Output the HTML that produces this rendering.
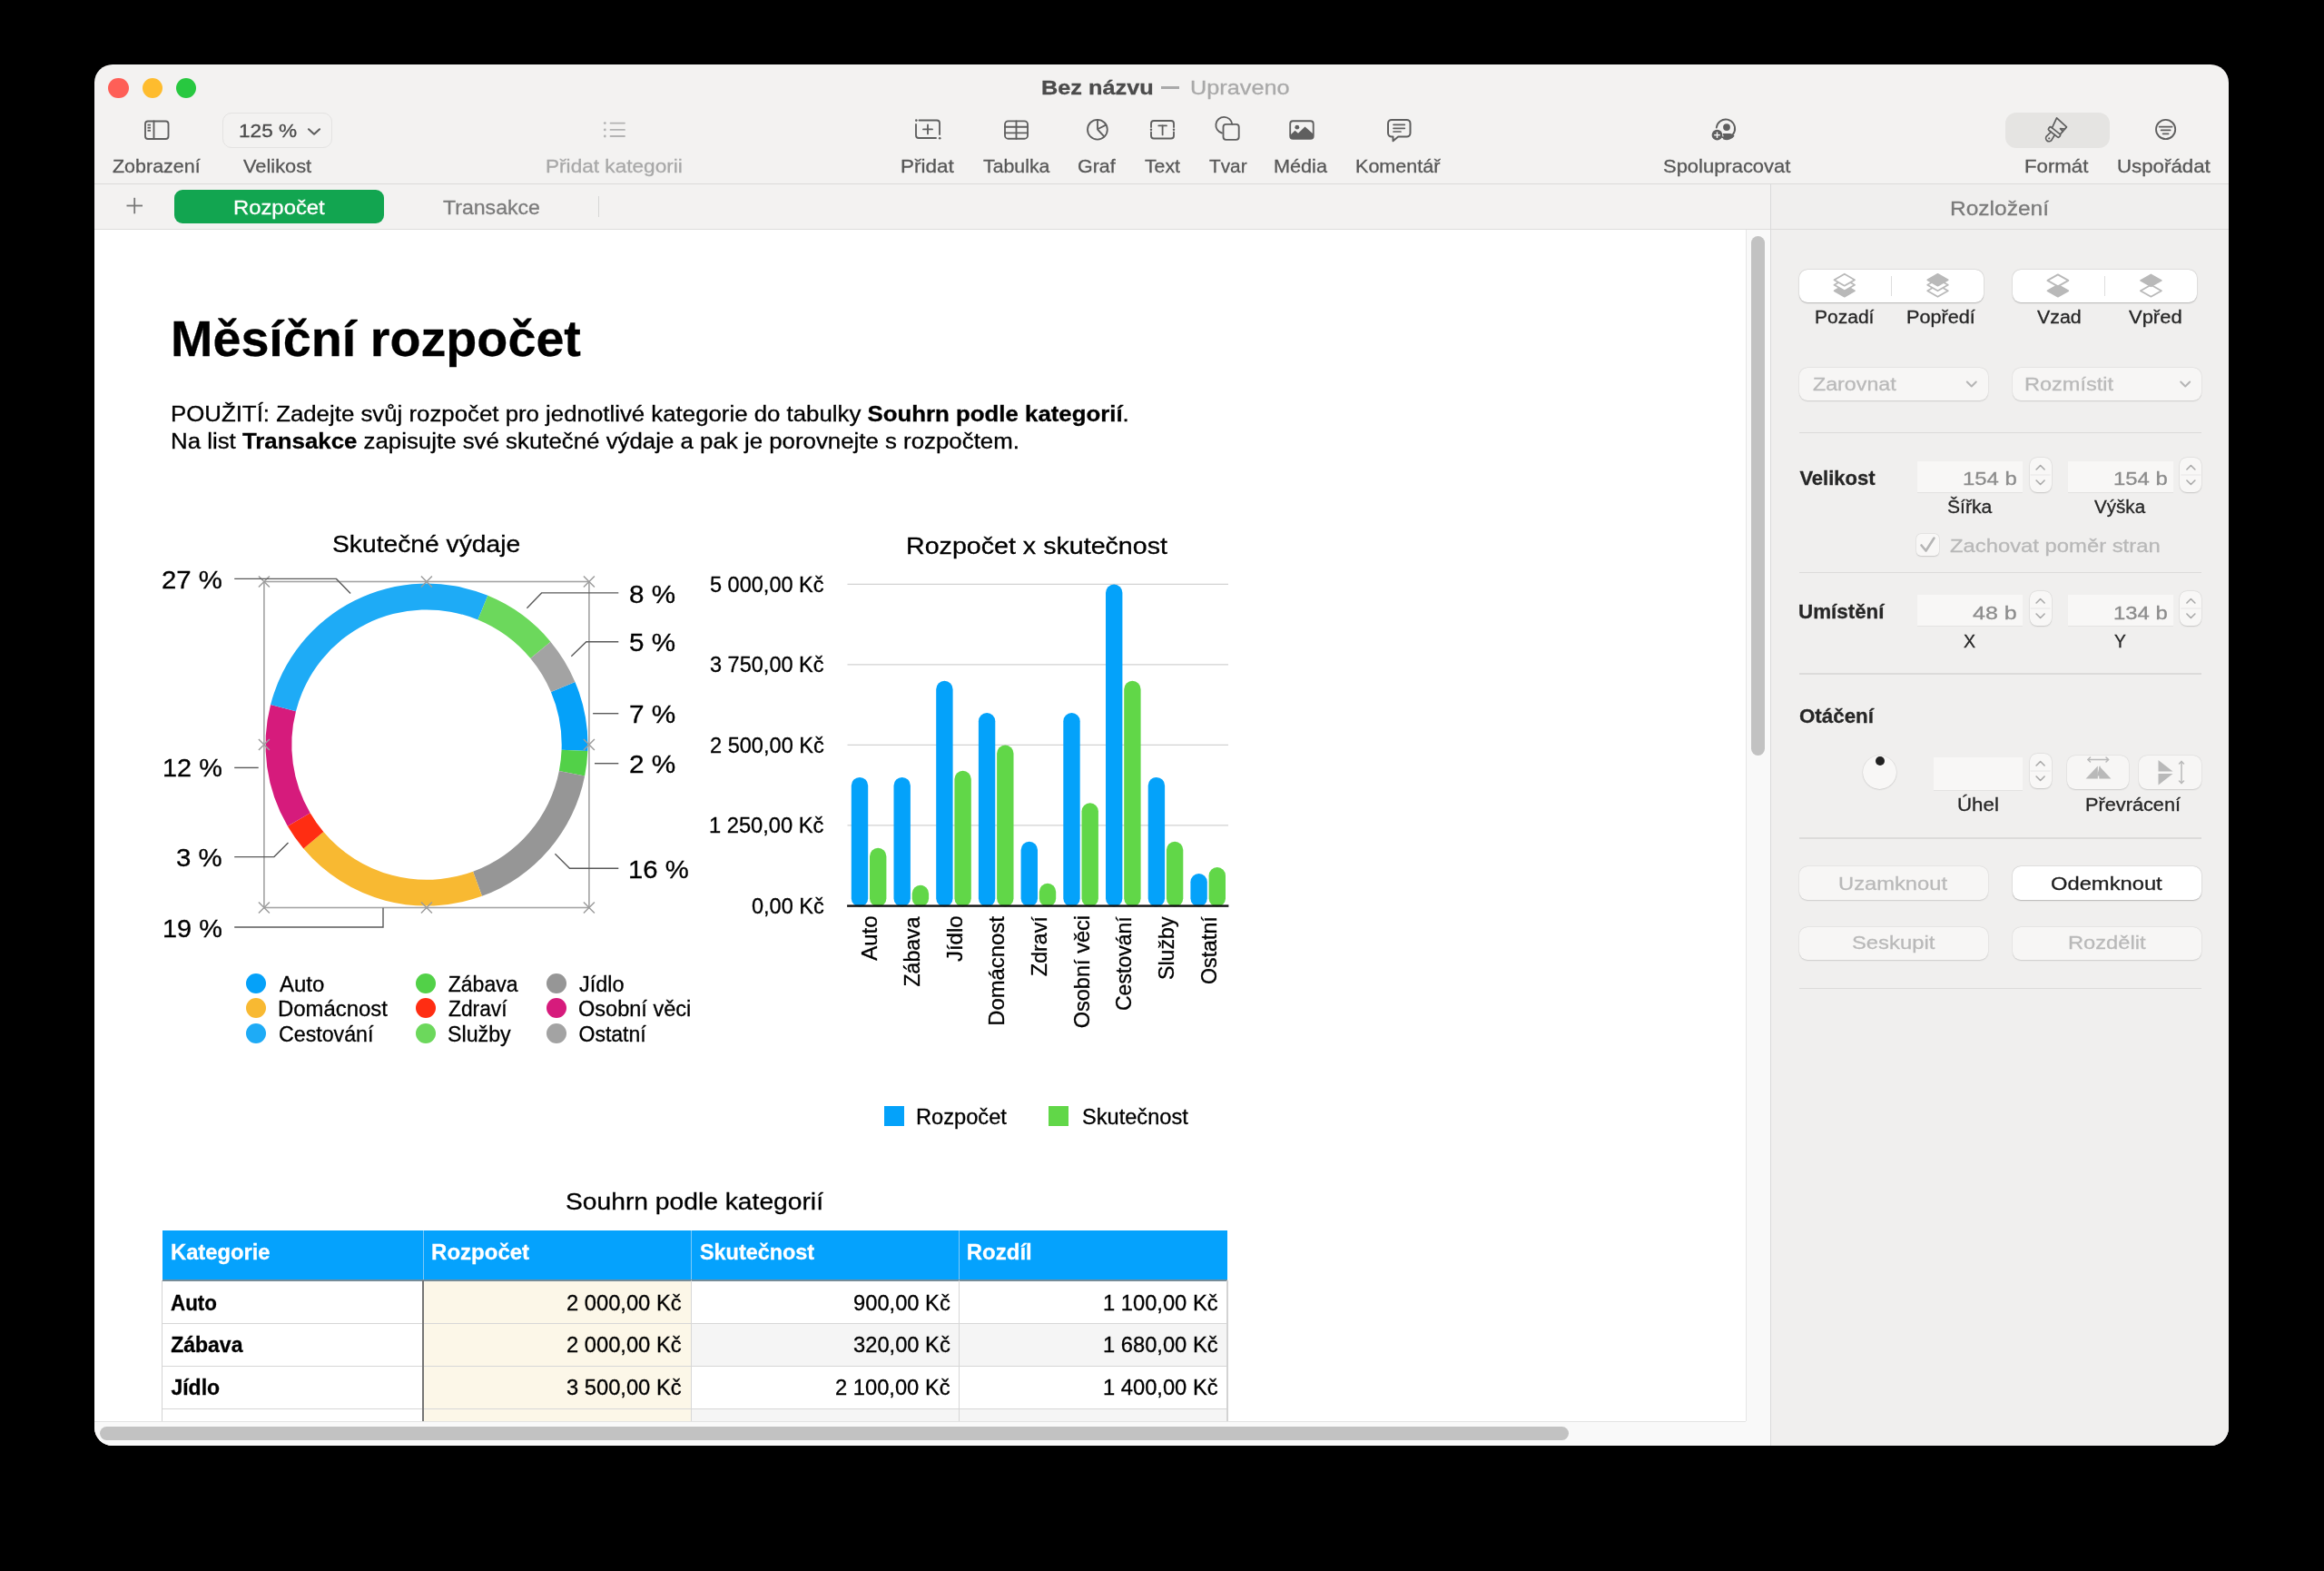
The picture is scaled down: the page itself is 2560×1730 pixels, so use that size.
<!DOCTYPE html>
<html><head><meta charset="utf-8"><title>Numbers – Bez názvu</title>
<style>
html,body{margin:0;padding:0;background:#000;width:2560px;height:1730px;overflow:hidden;}
body{position:relative;font-family:"Liberation Sans",sans-serif;}
.t{position:absolute;white-space:nowrap;transform-origin:0 0;font-family:"Liberation Sans",sans-serif;}
#root{position:absolute;left:0;top:0;width:2560px;height:1730px;will-change:transform;}
.t{-webkit-text-stroke:0.3px currentColor;}
svg text{stroke:#000;stroke-width:0.3px;}
svg{position:absolute;left:0;top:0;overflow:visible}
</style></head><body><div id="root">

<div id="win" style="position:absolute;left:104px;top:71px;width:2351px;height:1521px;border-radius:20px;background:#f3f2f1;overflow:hidden;">
</div>
<div style="position:absolute;left:104.00px;top:253.00px;width:1819.00px;height:1312.00px;background:#fff;"></div>
<div style="position:absolute;left:1923.00px;top:253.00px;width:27.00px;height:1312.00px;background:#f9f9f9;border-left:1.5px solid #e6e6e6;box-sizing:border-box;"></div>
<div style="position:absolute;left:1929.00px;top:259.60px;width:15.00px;height:572.20px;background:#c2c2c2;border-radius:7.5px;"></div>
<div style="position:absolute;left:104.00px;top:1565.00px;width:1846.00px;height:27.00px;background:#f9f9f9;border-bottom-left-radius:20px;"></div>
<div style="position:absolute;left:104.00px;top:1564.60px;width:1819.00px;height:1.20px;background:#e3e3e3;"></div>
<div style="position:absolute;left:110.00px;top:1571.30px;width:1618.00px;height:15.00px;background:#c2c2c2;border-radius:7.5px;"></div>
<div style="position:absolute;left:1950.00px;top:202.00px;width:505.00px;height:1390.00px;background:#f0efee;border-left:1px solid #dadada;box-sizing:border-box;border-bottom-right-radius:20px;"></div>
<div style="position:absolute;left:104.00px;top:202.00px;width:2351.00px;height:1.00px;background:#dbdad9;"></div>
<div style="position:absolute;left:104.00px;top:252.00px;width:2351.00px;height:1.00px;background:#dddcdb;"></div>
<div style="position:absolute;left:119.2px;top:85.7px;width:22.4px;height:22.4px;border-radius:50%;background:#fe5f57;"></div>
<div style="position:absolute;left:156.8px;top:85.7px;width:22.4px;height:22.4px;border-radius:50%;background:#febc2e;"></div>
<div style="position:absolute;left:194.0px;top:85.7px;width:22.4px;height:22.4px;border-radius:50%;background:#28c840;"></div>
<span class="t" style="left:1147.08px;top:86.00px;font-size:22px;line-height:22px;font-weight:bold;color:#4b4b4b;transform:scaleX(1.1498);">Bez názvu</span>
<div style="position:absolute;left:1279.00px;top:95.40px;width:20.30px;height:2.60px;background:#a9a9a9;"></div>
<span class="t" style="left:1311.43px;top:86.00px;font-size:22px;line-height:22px;font-weight:normal;color:#a9a9a9;transform:scaleX(1.1489);">Upraveno</span>
<span class="t" style="left:124.16px;top:172.00px;font-size:21px;line-height:21px;font-weight:normal;color:#575757;transform:scaleX(1.0226);">Zobrazení</span>
<span class="t" style="left:268.27px;top:172.00px;font-size:21px;line-height:21px;font-weight:normal;color:#575757;transform:scaleX(1.0385);">Velikost</span>
<span class="t" style="left:601.32px;top:172.00px;font-size:21px;line-height:21px;font-weight:normal;color:#a8a8a8;transform:scaleX(1.0769);">Přidat kategorii</span>
<span class="t" style="left:992.12px;top:172.00px;font-size:21px;line-height:21px;font-weight:normal;color:#575757;transform:scaleX(1.0717);">Přidat</span>
<span class="t" style="left:1082.79px;top:172.00px;font-size:21px;line-height:21px;font-weight:normal;color:#575757;transform:scaleX(1.0139);">Tabulka</span>
<span class="t" style="left:1187.28px;top:172.00px;font-size:21px;line-height:21px;font-weight:normal;color:#575757;transform:scaleX(1.0207);">Graf</span>
<span class="t" style="left:1260.99px;top:172.00px;font-size:21px;line-height:21px;font-weight:normal;color:#575757;transform:scaleX(1.0112);">Text</span>
<span class="t" style="left:1331.81px;top:172.00px;font-size:21px;line-height:21px;font-weight:normal;color:#575757;transform:scaleX(0.9897);">Tvar</span>
<span class="t" style="left:1403.00px;top:172.00px;font-size:21px;line-height:21px;font-weight:normal;color:#575757;transform:scaleX(1.0306);">Média</span>
<span class="t" style="left:1493.20px;top:172.00px;font-size:21px;line-height:21px;font-weight:normal;color:#575757;transform:scaleX(1.0265);">Komentář</span>
<span class="t" style="left:1831.65px;top:172.00px;font-size:21px;line-height:21px;font-weight:normal;color:#575757;transform:scaleX(1.0456);">Spolupracovat</span>
<span class="t" style="left:2229.95px;top:172.00px;font-size:21px;line-height:21px;font-weight:normal;color:#575757;transform:scaleX(1.0584);">Formát</span>
<span class="t" style="left:2332.48px;top:172.00px;font-size:21px;line-height:21px;font-weight:normal;color:#575757;transform:scaleX(1.0607);">Uspořádat</span>
<div style="position:absolute;left:245.20px;top:123.50px;width:121.20px;height:39.80px;border:1.5px solid #e3e2e1;border-radius:10px;box-sizing:border-box;background:#f3f2f1;"></div>
<span class="t" style="left:263.30px;top:133.80px;font-size:20px;line-height:20px;font-weight:normal;color:#4a4a4a;transform:scaleX(1.1303);">125 %</span>
<div style="position:absolute;left:2208.50px;top:124.00px;width:115.10px;height:39.30px;background:#e5e4e2;border-radius:12px;"></div>
<div style="position:absolute;left:192.30px;top:209.20px;width:230.80px;height:36.60px;background:#12a550;border-radius:9px;"></div>
<span class="t" style="left:256.70px;top:218.10px;font-size:22px;line-height:22px;font-weight:normal;color:#ffffff;transform:scaleX(1.0831);">Rozpočet</span>
<span class="t" style="left:487.68px;top:218.10px;font-size:22px;line-height:22px;font-weight:normal;color:#7b7b7b;transform:scaleX(1.0491);">Transakce</span>
<div style="position:absolute;left:659.30px;top:216.40px;width:1.20px;height:22.20px;background:#d6d6d6;"></div>
<span class="t" style="left:2148.05px;top:219.00px;font-size:22px;line-height:22px;font-weight:normal;color:#7a7a7a;transform:scaleX(1.1146);">Rozložení</span>
<span class="t" style="left:187.57px;top:345.00px;font-size:56px;line-height:56px;font-weight:bold;color:#000;transform:scaleX(0.9947);">Měsíční rozpočet</span>
<span class="t" style="left:188.00px;top:445.40px;font-size:23px;line-height:23px;color:#000;transform:scaleX(1.1222);">POUŽITÍ: Zadejte svůj rozpočet pro jednotlivé kategorie do tabulky <b>Souhrn podle kategorií</b>.</span>
<span class="t" style="left:187.99px;top:474.80px;font-size:23px;line-height:23px;color:#000;transform:scaleX(1.1233);">Na list <b>Transakce</b> zapisujte své skutečné výdaje a pak je porovnejte s rozpočtem.</span>
<span class="t" style="left:366.18px;top:585.50px;font-size:26px;line-height:26px;font-weight:normal;color:#000;transform:scaleX(1.0863);">Skutečné výdaje</span>
<span class="t" style="left:998.21px;top:589.10px;font-size:25px;line-height:25px;font-weight:normal;color:#000;transform:scaleX(1.1449);">Rozpočet x skutečnost</span>
<span class="t" style="left:622.78px;top:1309.90px;font-size:26px;line-height:26px;font-weight:normal;color:#000;transform:scaleX(1.0854);">Souhrn podle kategorií</span>
<span class="t" style="left:177.61px;top:625.80px;font-size:27px;line-height:27px;font-weight:normal;color:#000;transform:scaleX(1.0869);">27 %</span>
<span class="t" style="left:178.66px;top:832.70px;font-size:27px;line-height:27px;font-weight:normal;color:#000;transform:scaleX(1.0695);">12 %</span>
<span class="t" style="left:193.81px;top:931.60px;font-size:27px;line-height:27px;font-weight:normal;color:#000;transform:scaleX(1.0891);">3 %</span>
<span class="t" style="left:178.66px;top:1009.50px;font-size:27px;line-height:27px;font-weight:normal;color:#000;transform:scaleX(1.0695);">19 %</span>
<span class="t" style="left:693.07px;top:641.90px;font-size:27px;line-height:27px;font-weight:normal;color:#000;transform:scaleX(1.0966);">8 %</span>
<span class="t" style="left:693.07px;top:695.00px;font-size:27px;line-height:27px;font-weight:normal;color:#000;transform:scaleX(1.0966);">5 %</span>
<span class="t" style="left:692.78px;top:774.00px;font-size:27px;line-height:27px;font-weight:normal;color:#000;transform:scaleX(1.1028);">7 %</span>
<span class="t" style="left:692.78px;top:829.00px;font-size:27px;line-height:27px;font-weight:normal;color:#000;transform:scaleX(1.1028);">2 %</span>
<span class="t" style="left:692.13px;top:944.60px;font-size:27px;line-height:27px;font-weight:normal;color:#000;transform:scaleX(1.0832);">16 %</span>
<div style="position:absolute;left:271.4px;top:1072.0px;width:22px;height:22px;border-radius:50%;background:#05a1f9"></div>
<span class="t" style="left:307.80px;top:1073.00px;font-size:23px;line-height:23px;font-weight:normal;color:#000;transform:scaleX(1.0394);">Auto</span>
<div style="position:absolute;left:271.4px;top:1099.4px;width:22px;height:22px;border-radius:50%;background:#f8b932"></div>
<span class="t" style="left:305.85px;top:1100.40px;font-size:23px;line-height:23px;font-weight:normal;color:#000;transform:scaleX(1.0398);">Domácnost</span>
<div style="position:absolute;left:271.4px;top:1127.0px;width:22px;height:22px;border-radius:50%;background:#1eabf6"></div>
<span class="t" style="left:306.67px;top:1127.60px;font-size:23px;line-height:23px;font-weight:normal;color:#000;transform:scaleX(1.0083);">Cestování</span>
<div style="position:absolute;left:458.0px;top:1072.0px;width:22px;height:22px;border-radius:50%;background:#52d148"></div>
<span class="t" style="left:493.75px;top:1073.00px;font-size:23px;line-height:23px;font-weight:normal;color:#000;">Zábava</span>
<div style="position:absolute;left:458.0px;top:1099.4px;width:22px;height:22px;border-radius:50%;background:#ff2d12"></div>
<span class="t" style="left:493.76px;top:1100.40px;font-size:23px;line-height:23px;font-weight:normal;color:#000;transform:scaleX(0.9899);">Zdraví</span>
<div style="position:absolute;left:458.0px;top:1127.0px;width:22px;height:22px;border-radius:50%;background:#6cd85c"></div>
<span class="t" style="left:493.49px;top:1127.60px;font-size:23px;line-height:23px;font-weight:normal;color:#000;transform:scaleX(1.0088);">Služby</span>
<div style="position:absolute;left:602.0px;top:1072.0px;width:22px;height:22px;border-radius:50%;background:#969696"></div>
<span class="t" style="left:638.12px;top:1073.00px;font-size:23px;line-height:23px;font-weight:normal;color:#000;transform:scaleX(1.0201);">Jídlo</span>
<div style="position:absolute;left:602.0px;top:1099.4px;width:22px;height:22px;border-radius:50%;background:#d61b7c"></div>
<span class="t" style="left:637.48px;top:1100.40px;font-size:23px;line-height:23px;font-weight:normal;color:#000;transform:scaleX(1.0235);">Osobní věci</span>
<div style="position:absolute;left:602.0px;top:1127.0px;width:22px;height:22px;border-radius:50%;background:#a3a3a3"></div>
<span class="t" style="left:637.50px;top:1127.60px;font-size:23px;line-height:23px;font-weight:normal;color:#000;">Ostatní</span>
<span class="t" style="left:782.01px;top:632.60px;font-size:23px;line-height:23px;font-weight:normal;color:#000;transform:scaleX(1.0227);">5 000,00 Kč</span>
<span class="t" style="left:782.01px;top:721.10px;font-size:23px;line-height:23px;font-weight:normal;color:#000;transform:scaleX(1.0227);">3 750,00 Kč</span>
<span class="t" style="left:781.75px;top:809.60px;font-size:23px;line-height:23px;font-weight:normal;color:#000;transform:scaleX(1.0248);">2 500,00 Kč</span>
<span class="t" style="left:781.10px;top:898.10px;font-size:23px;line-height:23px;font-weight:normal;color:#000;transform:scaleX(1.0301);">1 250,00 Kč</span>
<span class="t" style="left:827.81px;top:986.60px;font-size:23px;line-height:23px;font-weight:normal;color:#000;transform:scaleX(1.0222);">0,00 Kč</span>
<div style="position:absolute;left:974.20px;top:1218.00px;width:22.30px;height:21.80px;background:#04a2fa;"></div>
<div style="position:absolute;left:1155.30px;top:1218.00px;width:21.90px;height:21.80px;background:#61d748;"></div>
<span class="t" style="left:1009.07px;top:1218.90px;font-size:23px;line-height:23px;font-weight:normal;color:#000;transform:scaleX(1.0281);">Rozpočet</span>
<span class="t" style="left:1191.67px;top:1218.90px;font-size:23px;line-height:23px;font-weight:normal;color:#000;transform:scaleX(1.0264);">Skutečnost</span>
<svg width="2560" height="1730" viewBox="0 0 2560 1730" style="position:absolute;left:0;top:0">
<path d="M633.45 750.89 A177.50 177.50 0 0 1 647.37 826.99 L618.59 825.87 A148.70 148.70 0 0 0 606.93 762.12 Z" fill="#05a1f9"/>
<path d="M647.37 826.99 A177.50 177.50 0 0 1 644.13 854.50 L615.88 848.92 A148.70 148.70 0 0 0 618.59 825.87 Z" fill="#52d148"/>
<path d="M644.13 854.50 A177.50 177.50 0 0 1 530.95 986.81 L521.06 959.76 A148.70 148.70 0 0 0 615.88 848.92 Z" fill="#969696"/>
<path d="M530.95 986.81 A177.50 177.50 0 0 1 334.33 934.56 L356.34 915.99 A148.70 148.70 0 0 0 521.06 959.76 Z" fill="#f8b932"/>
<path d="M334.33 934.56 A177.50 177.50 0 0 1 316.85 909.82 L341.70 895.26 A148.70 148.70 0 0 0 356.34 915.99 Z" fill="#ff2d12"/>
<path d="M316.85 909.82 A177.50 177.50 0 0 1 298.07 775.98 L325.97 783.14 A148.70 148.70 0 0 0 341.70 895.26 Z" fill="#d61b7c"/>
<path d="M298.07 775.98 A177.50 177.50 0 0 1 537.34 655.87 L526.41 682.52 A148.70 148.70 0 0 0 325.97 783.14 Z" fill="#1eabf6"/>
<path d="M537.34 655.87 A177.50 177.50 0 0 1 606.50 706.64 L584.35 725.05 A148.70 148.70 0 0 0 526.41 682.52 Z" fill="#6cd85c"/>
<path d="M606.50 706.64 A177.50 177.50 0 0 1 633.45 750.89 L606.93 762.12 A148.70 148.70 0 0 0 584.35 725.05 Z" fill="#a3a3a3"/>
<rect x="290.9" y="640.5" width="358" height="359" fill="none" stroke="#a3a3a3" stroke-width="1.6"/>
<path d="M284.9 634.5 l12 12 M296.9 634.5 l-12 12" stroke="#9d9d9d" stroke-width="1.5" fill="none"/>
<path d="M284.9 814.0 l12 12 M296.9 814.0 l-12 12" stroke="#9d9d9d" stroke-width="1.5" fill="none"/>
<path d="M284.9 993.5 l12 12 M296.9 993.5 l-12 12" stroke="#9d9d9d" stroke-width="1.5" fill="none"/>
<path d="M463.9 634.5 l12 12 M475.9 634.5 l-12 12" stroke="#9d9d9d" stroke-width="1.5" fill="none"/>
<path d="M463.9 993.5 l12 12 M475.9 993.5 l-12 12" stroke="#9d9d9d" stroke-width="1.5" fill="none"/>
<path d="M642.9 634.5 l12 12 M654.9 634.5 l-12 12" stroke="#9d9d9d" stroke-width="1.5" fill="none"/>
<path d="M642.9 814.0 l12 12 M654.9 814.0 l-12 12" stroke="#9d9d9d" stroke-width="1.5" fill="none"/>
<path d="M642.9 993.5 l12 12 M654.9 993.5 l-12 12" stroke="#9d9d9d" stroke-width="1.5" fill="none"/>
<path d="M258.2 637.4 H370.5 L386.1 653.6" stroke="#5a5a5a" stroke-width="1.4" fill="none"/>
<path d="M258.2 845.4 H284.7" stroke="#5a5a5a" stroke-width="1.4" fill="none"/>
<path d="M258.2 943.6 H301.9 L317.5 928" stroke="#5a5a5a" stroke-width="1.4" fill="none"/>
<path d="M258.2 1021 H422 V999.7" stroke="#5a5a5a" stroke-width="1.4" fill="none"/>
<path d="M681.3 652.9 H596.6 L580.4 669.8" stroke="#5a5a5a" stroke-width="1.4" fill="none"/>
<path d="M681.3 706.7 H645.8 L629.3 722.7" stroke="#5a5a5a" stroke-width="1.4" fill="none"/>
<path d="M681.3 785.7 H653.1" stroke="#5a5a5a" stroke-width="1.4" fill="none"/>
<path d="M681.3 840.7 H655" stroke="#5a5a5a" stroke-width="1.4" fill="none"/>
<path d="M681.3 956.3 H627.5 L611.4 940.3" stroke="#5a5a5a" stroke-width="1.4" fill="none"/>
<line x1="933.5" y1="643.3" x2="1353" y2="643.3" stroke="#d2d2d2" stroke-width="1.3"/>
<line x1="933.5" y1="731.8" x2="1353" y2="731.8" stroke="#d2d2d2" stroke-width="1.3"/>
<line x1="933.5" y1="820.3" x2="1353" y2="820.3" stroke="#d2d2d2" stroke-width="1.3"/>
<line x1="933.5" y1="908.8" x2="1353" y2="908.8" stroke="#d2d2d2" stroke-width="1.3"/>
<rect x="937.80" y="855.90" width="18.4" height="142.60" rx="9.2" fill="#04a2fa"/>
<rect x="958.00" y="933.78" width="18.4" height="64.72" rx="9.2" fill="#61d748"/>
<rect x="984.50" y="855.90" width="18.4" height="142.60" rx="9.2" fill="#04a2fa"/>
<rect x="1004.70" y="974.84" width="18.4" height="23.66" rx="9.2" fill="#61d748"/>
<rect x="1031.20" y="749.70" width="18.4" height="248.80" rx="9.2" fill="#04a2fa"/>
<rect x="1051.40" y="848.82" width="18.4" height="149.68" rx="9.2" fill="#61d748"/>
<rect x="1077.90" y="785.10" width="18.4" height="213.40" rx="9.2" fill="#04a2fa"/>
<rect x="1098.10" y="820.50" width="18.4" height="178.00" rx="9.2" fill="#61d748"/>
<rect x="1124.60" y="926.70" width="18.4" height="71.80" rx="9.2" fill="#04a2fa"/>
<rect x="1144.80" y="972.72" width="18.4" height="25.78" rx="9.2" fill="#61d748"/>
<rect x="1171.30" y="785.10" width="18.4" height="213.40" rx="9.2" fill="#04a2fa"/>
<rect x="1191.50" y="884.22" width="18.4" height="114.28" rx="9.2" fill="#61d748"/>
<rect x="1218.00" y="643.50" width="18.4" height="355.00" rx="9.2" fill="#04a2fa"/>
<rect x="1238.20" y="749.70" width="18.4" height="248.80" rx="9.2" fill="#61d748"/>
<rect x="1264.70" y="855.90" width="18.4" height="142.60" rx="9.2" fill="#04a2fa"/>
<rect x="1284.90" y="926.70" width="18.4" height="71.80" rx="9.2" fill="#61d748"/>
<rect x="1311.40" y="962.10" width="18.4" height="36.40" rx="9.2" fill="#04a2fa"/>
<rect x="1331.60" y="955.02" width="18.4" height="43.48" rx="9.2" fill="#61d748"/>
<rect x="933.1" y="996.4" width="420.3" height="2.4" fill="#111"/>
<text transform="translate(966.15 1008.42) rotate(-90) scale(1.0437 1)" text-anchor="end" font-family="Liberation Sans" font-size="23" fill="#000">Auto</text>
<text transform="translate(1012.85 1009.43) rotate(-90) scale(1.0066 1)" text-anchor="end" font-family="Liberation Sans" font-size="23" fill="#000">Zábava</text>
<text transform="translate(1059.55 1008.40) rotate(-90) scale(1.0434 1)" text-anchor="end" font-family="Liberation Sans" font-size="23" fill="#000">Jídlo</text>
<text transform="translate(1106.25 1009.19) rotate(-90) scale(1.0372 1)" text-anchor="end" font-family="Liberation Sans" font-size="23" fill="#000">Domácnost</text>
<text transform="translate(1152.95 1009.21) rotate(-90) scale(1.0101 1)" text-anchor="end" font-family="Liberation Sans" font-size="23" fill="#000">Zdraví</text>
<text transform="translate(1199.65 1007.91) rotate(-90) scale(1.0252 1)" text-anchor="end" font-family="Liberation Sans" font-size="23" fill="#000">Osobní věci</text>
<text transform="translate(1246.35 1009.21) rotate(-90) scale(1.0034 1)" text-anchor="end" font-family="Liberation Sans" font-size="23" fill="#000">Cestování</text>
<text transform="translate(1293.05 1009.37) rotate(-90) scale(1.0103 1)" text-anchor="end" font-family="Liberation Sans" font-size="23" fill="#000">Služby</text>
<text transform="translate(1339.75 1009.25) rotate(-90) scale(1.0082 1)" text-anchor="end" font-family="Liberation Sans" font-size="23" fill="#000">Ostatní</text>
</svg>
<div style="position:absolute;left:178.70px;top:1354.80px;width:1173.30px;height:55.20px;background:#05a2fd;"></div>
<div style="position:absolute;left:465.70px;top:1354.80px;width:1.00px;height:54.20px;background:#7cc9f7;"></div>
<div style="position:absolute;left:760.70px;top:1354.80px;width:1.00px;height:54.20px;background:#7cc9f7;"></div>
<div style="position:absolute;left:1055.70px;top:1354.80px;width:1.00px;height:54.20px;background:#7cc9f7;"></div>
<div style="position:absolute;left:178.70px;top:1408.60px;width:1173.30px;height:2.00px;background:#758c99;"></div>
<div style="position:absolute;left:466.20px;top:1410.60px;width:295.00px;height:46.50px;background:#fcf7e8;"></div>
<div style="position:absolute;left:466.20px;top:1457.10px;width:295.00px;height:47.20px;background:#fcf7e8;"></div>
<div style="position:absolute;left:761.20px;top:1457.10px;width:590.80px;height:47.20px;background:#f5f5f5;"></div>
<div style="position:absolute;left:466.20px;top:1504.30px;width:295.00px;height:46.80px;background:#fcf7e8;"></div>
<div style="position:absolute;left:466.20px;top:1551.10px;width:295.00px;height:13.60px;background:#fcf7e8;"></div>
<div style="position:absolute;left:761.20px;top:1551.10px;width:590.80px;height:13.60px;background:#f5f5f5;"></div>
<div style="position:absolute;left:178.70px;top:1456.60px;width:1173.30px;height:1.10px;background:#d7d7d7;"></div>
<div style="position:absolute;left:178.70px;top:1503.80px;width:1173.30px;height:1.10px;background:#d7d7d7;"></div>
<div style="position:absolute;left:178.70px;top:1550.60px;width:1173.30px;height:1.10px;background:#d7d7d7;"></div>
<div style="position:absolute;left:178.20px;top:1410.00px;width:1.20px;height:155.00px;background:#d3d3d3;"></div>
<div style="position:absolute;left:1351.40px;top:1410.00px;width:1.20px;height:155.00px;background:#d3d3d3;"></div>
<div style="position:absolute;left:760.70px;top:1410.00px;width:1.10px;height:155.00px;background:#d7d7d7;"></div>
<div style="position:absolute;left:1055.70px;top:1410.00px;width:1.10px;height:155.00px;background:#d7d7d7;"></div>
<div style="position:absolute;left:465.40px;top:1410.00px;width:1.70px;height:155.00px;background:#767676;"></div>
<span class="t" style="left:187.69px;top:1366.90px;font-size:24px;line-height:24px;font-weight:bold;color:#fff;transform:scaleX(0.9894);">Kategorie</span>
<span class="t" style="left:475.08px;top:1366.90px;font-size:24px;line-height:24px;font-weight:bold;color:#fff;">Rozpočet</span>
<span class="t" style="left:771.09px;top:1366.90px;font-size:24px;line-height:24px;font-weight:bold;color:#fff;transform:scaleX(0.9751);">Skutečnost</span>
<span class="t" style="left:1064.77px;top:1366.90px;font-size:24px;line-height:24px;font-weight:bold;color:#fff;">Rozdíl</span>
<span class="t" style="left:188.31px;top:1423.50px;font-size:23px;line-height:23px;font-weight:bold;color:#000;transform:scaleX(0.9725);">Auto</span>
<span class="t" style="left:624.29px;top:1423.50px;font-size:23px;line-height:23px;font-weight:normal;color:#000;transform:scaleX(1.0310);">2 000,00 Kč</span>
<span class="t" style="left:939.51px;top:1423.50px;font-size:23px;line-height:23px;font-weight:normal;color:#000;transform:scaleX(1.0310);">900,00 Kč</span>
<span class="t" style="left:1215.29px;top:1423.50px;font-size:23px;line-height:23px;font-weight:normal;color:#000;transform:scaleX(1.0310);">1 100,00 Kč</span>
<span class="t" style="left:188.18px;top:1470.30px;font-size:23px;line-height:23px;font-weight:bold;color:#000;">Zábava</span>
<span class="t" style="left:624.29px;top:1470.30px;font-size:23px;line-height:23px;font-weight:normal;color:#000;transform:scaleX(1.0310);">2 000,00 Kč</span>
<span class="t" style="left:939.51px;top:1470.30px;font-size:23px;line-height:23px;font-weight:normal;color:#000;transform:scaleX(1.0310);">320,00 Kč</span>
<span class="t" style="left:1215.29px;top:1470.30px;font-size:23px;line-height:23px;font-weight:normal;color:#000;transform:scaleX(1.0310);">1 680,00 Kč</span>
<span class="t" style="left:188.43px;top:1517.10px;font-size:23px;line-height:23px;font-weight:bold;color:#000;">Jídlo</span>
<span class="t" style="left:624.29px;top:1517.10px;font-size:23px;line-height:23px;font-weight:normal;color:#000;transform:scaleX(1.0310);">3 500,00 Kč</span>
<span class="t" style="left:919.79px;top:1517.10px;font-size:23px;line-height:23px;font-weight:normal;color:#000;transform:scaleX(1.0310);">2 100,00 Kč</span>
<span class="t" style="left:1215.29px;top:1517.10px;font-size:23px;line-height:23px;font-weight:normal;color:#000;transform:scaleX(1.0310);">1 400,00 Kč</span>
<div style="position:absolute;left:1981.80px;top:297.20px;width:203.20px;height:35.80px;background:#fff;border-radius:9px;box-shadow:0 0.5px 1.5px rgba(0,0,0,0.22),0 0 0 0.5px rgba(0,0,0,0.06);"></div>
<div style="position:absolute;left:2216.90px;top:297.20px;width:203.10px;height:35.80px;background:#fff;border-radius:9px;box-shadow:0 0.5px 1.5px rgba(0,0,0,0.22),0 0 0 0.5px rgba(0,0,0,0.06);"></div>
<div style="position:absolute;left:2082.80px;top:304.40px;width:1.20px;height:22.00px;background:#dedede;"></div>
<div style="position:absolute;left:2317.80px;top:304.40px;width:1.20px;height:22.00px;background:#dedede;"></div>
<span class="t" style="left:1998.79px;top:339.00px;font-size:20px;line-height:20px;font-weight:normal;color:#262626;transform:scaleX(1.0507);">Pozadí</span>
<span class="t" style="left:2100.24px;top:339.00px;font-size:20px;line-height:20px;font-weight:normal;color:#262626;transform:scaleX(1.0823);">Popředí</span>
<span class="t" style="left:2244.17px;top:339.00px;font-size:20px;line-height:20px;font-weight:normal;color:#262626;transform:scaleX(1.0667);">Vzad</span>
<span class="t" style="left:2345.16px;top:339.00px;font-size:20px;line-height:20px;font-weight:normal;color:#262626;transform:scaleX(1.0981);">Vpřed</span>
<div style="position:absolute;left:1981.80px;top:405.40px;width:208.70px;height:35.20px;background:#f7f6f5;border-radius:9px;box-shadow:0 0.5px 1.5px rgba(0,0,0,0.13),0 0 0 0.5px rgba(0,0,0,0.04);"></div>
<div style="position:absolute;left:2216.90px;top:405.40px;width:208.60px;height:35.20px;background:#f7f6f5;border-radius:9px;box-shadow:0 0.5px 1.5px rgba(0,0,0,0.13),0 0 0 0.5px rgba(0,0,0,0.04);"></div>
<span class="t" style="left:1997.21px;top:411.60px;font-size:21px;line-height:21px;font-weight:normal;color:#b9b9b9;transform:scaleX(1.1068);">Zarovnat</span>
<span class="t" style="left:2230.24px;top:411.60px;font-size:21px;line-height:21px;font-weight:normal;color:#b9b9b9;transform:scaleX(1.1212);">Rozmístit</span>
<div style="position:absolute;left:1981.80px;top:476.20px;width:443.70px;height:1.30px;background:#dcdbda;"></div>
<div style="position:absolute;left:1981.80px;top:629.50px;width:443.70px;height:1.30px;background:#dcdbda;"></div>
<div style="position:absolute;left:1981.80px;top:741.30px;width:443.70px;height:1.30px;background:#dcdbda;"></div>
<div style="position:absolute;left:1981.80px;top:922.40px;width:443.70px;height:1.30px;background:#dcdbda;"></div>
<div style="position:absolute;left:1981.80px;top:1088.00px;width:443.70px;height:1.30px;background:#dcdbda;"></div>
<span class="t" style="left:1982.38px;top:516.00px;font-size:22px;line-height:22px;font-weight:bold;color:#262626;">Velikost</span>
<span class="t" style="left:1981.23px;top:663.00px;font-size:22px;line-height:22px;font-weight:bold;color:#262626;transform:scaleX(1.0168);">Umístění</span>
<span class="t" style="left:1981.61px;top:778.30px;font-size:22px;line-height:22px;font-weight:bold;color:#262626;transform:scaleX(1.0149);">Otáčení</span>
<div style="position:absolute;left:2112.00px;top:508.00px;width:115.80px;height:33.60px;background:#f8f7f6;box-shadow:0 0.5px 0 rgba(0,0,0,0.10);"></div>
<div style="position:absolute;left:2278.00px;top:508.00px;width:115.70px;height:33.60px;background:#f8f7f6;box-shadow:0 0.5px 0 rgba(0,0,0,0.10);"></div>
<div style="position:absolute;left:2235.50px;top:504.30px;width:24.20px;height:37.30px;background:#f8f7f6;border-radius:8px;box-shadow:0 0.5px 1.5px rgba(0,0,0,0.15),0 0 0 0.5px rgba(0,0,0,0.05);"></div>
<div style="position:absolute;left:2401.30px;top:504.30px;width:24.20px;height:37.30px;background:#f8f7f6;border-radius:8px;box-shadow:0 0.5px 1.5px rgba(0,0,0,0.15),0 0 0 0.5px rgba(0,0,0,0.05);"></div>
<span class="t" style="left:2162.25px;top:516.20px;font-size:21px;line-height:21px;font-weight:normal;color:#8c8c8c;transform:scaleX(1.1392);">154 b</span>
<span class="t" style="left:2328.15px;top:516.20px;font-size:21px;line-height:21px;font-weight:normal;color:#8c8c8c;transform:scaleX(1.1372);">154 b</span>
<div style="position:absolute;left:2112.00px;top:655.00px;width:115.80px;height:33.70px;background:#f8f7f6;box-shadow:0 0.5px 0 rgba(0,0,0,0.10);"></div>
<div style="position:absolute;left:2278.00px;top:655.00px;width:115.70px;height:33.70px;background:#f8f7f6;box-shadow:0 0.5px 0 rgba(0,0,0,0.10);"></div>
<div style="position:absolute;left:2235.50px;top:651.20px;width:24.20px;height:37.50px;background:#f8f7f6;border-radius:8px;box-shadow:0 0.5px 1.5px rgba(0,0,0,0.15),0 0 0 0.5px rgba(0,0,0,0.05);"></div>
<div style="position:absolute;left:2401.30px;top:651.20px;width:24.20px;height:37.50px;background:#f8f7f6;border-radius:8px;box-shadow:0 0.5px 1.5px rgba(0,0,0,0.15),0 0 0 0.5px rgba(0,0,0,0.05);"></div>
<span class="t" style="left:2173.40px;top:663.50px;font-size:21px;line-height:21px;font-weight:normal;color:#8c8c8c;transform:scaleX(1.1912);">48 b</span>
<span class="t" style="left:2328.15px;top:663.50px;font-size:21px;line-height:21px;font-weight:normal;color:#8c8c8c;transform:scaleX(1.1372);">134 b</span>
<div style="position:absolute;left:2130.00px;top:834.30px;width:97.80px;height:35.60px;background:#f8f7f6;box-shadow:0 0.5px 0 rgba(0,0,0,0.10);"></div>
<div style="position:absolute;left:2235.50px;top:830.40px;width:24.20px;height:37.30px;background:#f8f7f6;border-radius:8px;box-shadow:0 0.5px 1.5px rgba(0,0,0,0.15),0 0 0 0.5px rgba(0,0,0,0.05);"></div>
<span class="t" style="left:2144.58px;top:547.70px;font-size:20px;line-height:20px;font-weight:normal;color:#262626;transform:scaleX(1.0557);">Šířka</span>
<span class="t" style="left:2306.87px;top:547.70px;font-size:20px;line-height:20px;font-weight:normal;color:#262626;transform:scaleX(1.0299);">Výška</span>
<span class="t" style="left:2162.51px;top:695.90px;font-size:20px;line-height:20px;font-weight:normal;color:#262626;transform:scaleX(0.9778);">X</span>
<span class="t" style="left:2329.02px;top:695.90px;font-size:20px;line-height:20px;font-weight:normal;color:#262626;transform:scaleX(0.9616);">Y</span>
<span class="t" style="left:2155.93px;top:876.00px;font-size:20px;line-height:20px;font-weight:normal;color:#262626;transform:scaleX(1.1153);">Úhel</span>
<span class="t" style="left:2297.43px;top:876.00px;font-size:20px;line-height:20px;font-weight:normal;color:#262626;transform:scaleX(1.0863);">Převrácení</span>
<div style="position:absolute;left:2111.40px;top:587.70px;width:24.20px;height:24.80px;background:#f8f7f6;border-radius:5px;box-shadow:0 0.5px 1.5px rgba(0,0,0,0.14),0 0 0 0.5px rgba(0,0,0,0.05);"></div>
<span class="t" style="left:2148.09px;top:590.10px;font-size:21px;line-height:21px;font-weight:normal;color:#b8b8b8;transform:scaleX(1.1340);">Zachovat poměr stran</span>
<div style="position:absolute;left:2051.7px;top:831.9px;width:37.4px;height:37.4px;border-radius:50%;background:#f8f7f6;box-shadow:0 0.5px 1.5px rgba(0,0,0,0.18),0 0 0 0.5px rgba(0,0,0,0.05)"></div>
<div style="position:absolute;left:2065.8px;top:833.0px;width:10px;height:10px;border-radius:50%;background:#222"></div>
<div style="position:absolute;left:2276.60px;top:832.10px;width:68.10px;height:37.40px;background:#f7f6f5;border-radius:9px;box-shadow:0 0.5px 1.5px rgba(0,0,0,0.13),0 0 0 0.5px rgba(0,0,0,0.04);"></div>
<div style="position:absolute;left:2356.30px;top:832.10px;width:68.60px;height:37.40px;background:#f7f6f5;border-radius:9px;box-shadow:0 0.5px 1.5px rgba(0,0,0,0.13),0 0 0 0.5px rgba(0,0,0,0.04);"></div>
<div style="position:absolute;left:1981.80px;top:953.90px;width:208.70px;height:37.40px;background:#f7f6f5;border-radius:9px;box-shadow:0 0.5px 1.5px rgba(0,0,0,0.13),0 0 0 0.5px rgba(0,0,0,0.04);"></div>
<div style="position:absolute;left:2216.90px;top:953.90px;width:208.60px;height:37.40px;background:#fff;border-radius:9px;box-shadow:0 0.5px 1.5px rgba(0,0,0,0.22),0 0 0 0.5px rgba(0,0,0,0.06);"></div>
<div style="position:absolute;left:1981.80px;top:1020.90px;width:208.70px;height:35.80px;background:#f7f6f5;border-radius:9px;box-shadow:0 0.5px 1.5px rgba(0,0,0,0.13),0 0 0 0.5px rgba(0,0,0,0.04);"></div>
<div style="position:absolute;left:2216.90px;top:1020.90px;width:208.60px;height:35.80px;background:#f7f6f5;border-radius:9px;box-shadow:0 0.5px 1.5px rgba(0,0,0,0.13),0 0 0 0.5px rgba(0,0,0,0.04);"></div>
<span class="t" style="left:2025.06px;top:961.80px;font-size:21px;line-height:21px;font-weight:normal;color:#b9b9b9;transform:scaleX(1.1301);">Uzamknout</span>
<span class="t" style="left:2258.97px;top:961.80px;font-size:21px;line-height:21px;font-weight:normal;color:#1e1e1e;transform:scaleX(1.1302);">Odemknout</span>
<span class="t" style="left:2039.97px;top:1027.10px;font-size:21px;line-height:21px;font-weight:normal;color:#b9b9b9;transform:scaleX(1.1333);">Seskupit</span>
<span class="t" style="left:2277.53px;top:1027.10px;font-size:21px;line-height:21px;font-weight:normal;color:#b9b9b9;transform:scaleX(1.1270);">Rozdělit</span>
<svg width="2560" height="1730" viewBox="0 0 2560 1730" style="position:absolute;left:0;top:0">
<path d="M2031.8 313.8 L2043.0 320.3 L2031.8 326.8 L2020.5 320.3 Z" fill="#b9b9b9" stroke="#b9b9b9" stroke-width="1.6" stroke-linejoin="round"/>
<path d="M2031.8 307.3 L2043.0 313.8 L2031.8 320.3 L2020.5 313.8 Z" fill="#fff" stroke="#b9b9b9" stroke-width="1.8" stroke-linejoin="round"/>
<path d="M2031.8 301.7 L2043.0 308.2 L2031.8 314.7 L2020.5 308.2 Z" fill="#fff" stroke="#b9b9b9" stroke-width="1.8" stroke-linejoin="round"/>
<path d="M2134.5 313.8 L2145.8 320.3 L2134.5 326.8 L2123.2 320.3 Z" fill="#fff" stroke="#b9b9b9" stroke-width="1.8" stroke-linejoin="round"/>
<path d="M2134.5 307.3 L2145.8 313.8 L2134.5 320.3 L2123.2 313.8 Z" fill="#fff" stroke="#b9b9b9" stroke-width="1.8" stroke-linejoin="round"/>
<path d="M2134.5 301.7 L2145.8 308.2 L2134.5 314.7 L2123.2 308.2 Z" fill="#b9b9b9" stroke="#b9b9b9" stroke-width="1.6" stroke-linejoin="round"/>
<path d="M2266.9 313.7 L2278.4 320.2 L2266.9 326.7 L2255.4 320.2 Z" fill="#b9b9b9" stroke="#b9b9b9" stroke-width="1.6" stroke-linejoin="round"/>
<path d="M2266.9 302.4 L2278.4 308.9 L2266.9 315.4 L2255.4 308.9 Z" fill="#fff" stroke="#b9b9b9" stroke-width="1.8" stroke-linejoin="round"/>
<path d="M2369.4 313.7 L2380.9 320.2 L2369.4 326.7 L2357.9 320.2 Z" fill="#fff" stroke="#b9b9b9" stroke-width="1.8" stroke-linejoin="round"/>
<path d="M2369.4 302.4 L2380.9 308.9 L2369.4 315.4 L2357.9 308.9 Z" fill="#b9b9b9" stroke="#b9b9b9" stroke-width="1.6" stroke-linejoin="round"/>
<polyline points="2166.8,420.5 2171.8,425.5 2176.8,420.5" fill="none" stroke="#b5b5b5" stroke-width="2" stroke-linecap="round" stroke-linejoin="round"/>
<polyline points="2402.2,420.5 2407.2,425.5 2412.2,420.5" fill="none" stroke="#b5b5b5" stroke-width="2" stroke-linecap="round" stroke-linejoin="round"/>
<polyline points="2243.1,517.0 2247.6,512.5 2252.1,517.0" fill="none" stroke="#a9a9a9" stroke-width="1.6" stroke-linecap="round" stroke-linejoin="round"/>
<polyline points="2243.1,529.0 2247.6,533.5 2252.1,529.0" fill="none" stroke="#a9a9a9" stroke-width="1.6" stroke-linecap="round" stroke-linejoin="round"/>
<line x1="2236.6" y1="523.0" x2="2258.6" y2="523.0" stroke="#e6e6e6" stroke-width="1"/>
<polyline points="2408.9,517.0 2413.4,512.5 2417.9,517.0" fill="none" stroke="#a9a9a9" stroke-width="1.6" stroke-linecap="round" stroke-linejoin="round"/>
<polyline points="2408.9,529.0 2413.4,533.5 2417.9,529.0" fill="none" stroke="#a9a9a9" stroke-width="1.6" stroke-linecap="round" stroke-linejoin="round"/>
<line x1="2402.4" y1="523.0" x2="2424.4" y2="523.0" stroke="#e6e6e6" stroke-width="1"/>
<polyline points="2243.1,664.0 2247.6,659.5 2252.1,664.0" fill="none" stroke="#a9a9a9" stroke-width="1.6" stroke-linecap="round" stroke-linejoin="round"/>
<polyline points="2243.1,676.0 2247.6,680.5 2252.1,676.0" fill="none" stroke="#a9a9a9" stroke-width="1.6" stroke-linecap="round" stroke-linejoin="round"/>
<line x1="2236.6" y1="670.0" x2="2258.6" y2="670.0" stroke="#e6e6e6" stroke-width="1"/>
<polyline points="2408.9,664.0 2413.4,659.5 2417.9,664.0" fill="none" stroke="#a9a9a9" stroke-width="1.6" stroke-linecap="round" stroke-linejoin="round"/>
<polyline points="2408.9,676.0 2413.4,680.5 2417.9,676.0" fill="none" stroke="#a9a9a9" stroke-width="1.6" stroke-linecap="round" stroke-linejoin="round"/>
<line x1="2402.4" y1="670.0" x2="2424.4" y2="670.0" stroke="#e6e6e6" stroke-width="1"/>
<polyline points="2243.1,843.0 2247.6,838.5 2252.1,843.0" fill="none" stroke="#a9a9a9" stroke-width="1.6" stroke-linecap="round" stroke-linejoin="round"/>
<polyline points="2243.1,855.0 2247.6,859.5 2252.1,855.0" fill="none" stroke="#a9a9a9" stroke-width="1.6" stroke-linecap="round" stroke-linejoin="round"/>
<line x1="2236.6" y1="849.0" x2="2258.6" y2="849.0" stroke="#e6e6e6" stroke-width="1"/>
<polyline points="2116.5,600.5 2121.5,606.5 2130.5,592.5" fill="none" stroke="#b5b5b5" stroke-width="2.6" stroke-linecap="round" stroke-linejoin="round"/>
<g fill="#b9b9b9" stroke="none"><path d="M2310 854.5 L2316.2 854.5 L2313.1 843 Z"/><path d="M2310.8 857.5 V843.5 L2297.6 857.5 Z"/><path d="M2312.3 857.5 V843.5 L2325.4 857.5 Z"/></g>
<g stroke="#b9b9b9" stroke-width="1.5" fill="none" stroke-linecap="round"><line x1="2300" y1="836.5" x2="2322.5" y2="836.5"/><polyline points="2302.5,834 2300,836.5 2302.5,839"/><polyline points="2320,834 2322.5,836.5 2320,839"/></g>
<g fill="#b9b9b9" stroke="none"><path d="M2377.5 837 V849.6 L2393.5 849.6 Z"/><path d="M2377.5 852 V864.6 L2393.5 852 Z"/></g>
<g stroke="#b9b9b9" stroke-width="1.5" fill="none" stroke-linecap="round"><line x1="2403" y1="838.5" x2="2403" y2="862.5"/><polyline points="2400.5,841 2403,838.5 2405.5,841"/><polyline points="2400.5,860 2403,862.5 2405.5,860"/></g>
</svg>
<svg width="2560" height="1730" viewBox="0 0 2560 1730" style="position:absolute;left:0;top:0">
<g fill="none" stroke="#5f5f5f" stroke-width="1.85" stroke-linecap="round" stroke-linejoin="round">
<rect x="160" y="133.5" width="25.5" height="19.5" rx="3"/>
<line x1="169.5" y1="133.5" x2="169.5" y2="153"/>
<g stroke-width="1.8" stroke-linecap="butt"><line x1="162.5" y1="137.6" x2="166" y2="137.6"/><line x1="162.5" y1="140.7" x2="166" y2="140.7"/><line x1="162.5" y1="143.8" x2="166" y2="143.8"/></g>
<polyline points="340,142.3 346,147.7 352,142.3" stroke-width="2.2"/>
<path d="M1012.5 132.5 H1032 a3 3 0 0 1 3 3 V148"/>
<path d="M1031 152 H1012 a3 3 0 0 1 -3 -3 V137"/>
<circle cx="1009.3" cy="132.6" r="1.3" fill="#5f5f5f" stroke="none"/><circle cx="1035.2" cy="152.2" r="1.3" fill="#5f5f5f" stroke="none"/>
<line x1="1017" y1="142.4" x2="1027" y2="142.4"/><line x1="1022" y1="137.4" x2="1022" y2="147.4"/>
<rect x="1107" y="133.4" width="25" height="19.3" rx="3.5"/>
<line x1="1119.5" y1="133.4" x2="1119.5" y2="152.7"/><line x1="1107" y1="139.7" x2="1132" y2="139.7"/><line x1="1107" y1="146.3" x2="1132" y2="146.3"/>
<circle cx="1208.9" cy="142.7" r="10.9"/>
<polyline points="1209,131.8 1209,142.3 1218.2,137.6"/><line x1="1209.5" y1="143" x2="1216.3" y2="150.4"/>
<path d="M1268 140 V136 a3 3 0 0 1 3 -3 H1290 a3 3 0 0 1 3 3 V140"/>
<path d="M1268 145.5 V149.5 a3 3 0 0 0 3 3 H1290 a3 3 0 0 0 3 -3 V145.5"/>
<circle cx="1268" cy="142.7" r="1.2" fill="#5f5f5f" stroke="none"/><circle cx="1293" cy="142.7" r="1.2" fill="#5f5f5f" stroke="none"/>
<g stroke-width="1.8"><line x1="1276.3" y1="138.4" x2="1285" y2="138.4"/><line x1="1280.6" y1="138.4" x2="1280.6" y2="148.4"/></g>
<path d="M1346 146.5 A9 9 0 1 1 1357.3 136.8"/>
<rect x="1347.5" y="136.8" width="17.2" height="17" rx="3"/>
<rect x="1421.2" y="133.2" width="25.5" height="19.5" rx="3"/>
<circle cx="1428.8" cy="140.2" r="2.4" fill="#5f5f5f" stroke="none"/>
<path d="M1421.5 148.5 L1426.5 143.8 L1430 146.8 L1437.5 139.5 L1446.5 147.5 V150 a2.5 2.5 0 0 1 -2.5 2.5 H1424 a2.5 2.5 0 0 1 -2.5 -2.5 Z" fill="#5f5f5f" stroke="none"/>
<path d="M1533 131.9 H1549.5 a4 4 0 0 1 4 4 V146.6 a4 4 0 0 1 -4 4 H1540.2 L1534.5 155.3 V150.6 H1533 a4 4 0 0 1 -4 -4 V135.9 a4 4 0 0 1 4 -4 Z" stroke-width="2"/>
<g stroke-width="1.7"><line x1="1535" y1="137.3" x2="1547.3" y2="137.3"/><line x1="1535" y1="141.3" x2="1547.3" y2="141.3"/><line x1="1535" y1="145" x2="1543" y2="145"/></g>
<path d="M1890.8 140.5 A10.2 10.2 0 1 1 1897.3 151.2" stroke-width="1.9"/>
<circle cx="1902" cy="140.1" r="3.9" fill="#5f5f5f" stroke="none"/>
<path d="M1897.8 147 H1906 a5.6 5.6 0 0 1 4.6 2.8 A10 10 0 0 1 1898 153.2 A8 8 0 0 0 1897.8 147 Z" fill="#5f5f5f" stroke="none"/>
<circle cx="1891.5" cy="148.7" r="5.9" fill="#5f5f5f" stroke="none"/>
<g stroke="#f3f2f1" stroke-width="1.5" stroke-linecap="butt"><line x1="1888.2" y1="148.7" x2="1894.8" y2="148.7"/><line x1="1891.5" y1="145.4" x2="1891.5" y2="152"/></g>
<g transform="translate(2256.5 153) rotate(38)" stroke-width="1.7">
<path d="M-2.6 -7.8 L-3.5 -1 A3.5 3.5 0 0 0 3.5 -1 L2.6 -7.8"/>
<circle cx="0.2" cy="-0.9" r="1.1" fill="#5f5f5f" stroke="none"/>
<rect x="-7" y="-12" width="15" height="4.2" rx="1.5"/>
<path d="M-4.4 -12 L-7.1 -23.8 L7.7 -22.6 L7 -12"/>
<path d="M7.5 -19.8 L3.2 -17 L7.3 -16.2"/>
</g>
<circle cx="2385.6" cy="142.5" r="10.6"/>
<g stroke-width="1.8"><line x1="2378.6" y1="139.6" x2="2392.6" y2="139.6"/><line x1="2380.6" y1="143.4" x2="2390.6" y2="143.4"/><line x1="2382.6" y1="147.3" x2="2388.6" y2="147.3"/></g>
</g>
<g fill="#b3b3b3" stroke="none"><circle cx="666.3" cy="135.6" r="1.4"/><circle cx="666.3" cy="142.9" r="1.4"/><circle cx="666.3" cy="150" r="1.4"/></g>
<g stroke="#b3b3b3" stroke-width="1.8" stroke-linecap="round"><line x1="672.5" y1="135.6" x2="688" y2="135.6"/><line x1="672.5" y1="142.9" x2="688" y2="142.9"/><line x1="672.5" y1="150" x2="688" y2="150"/></g>
<g stroke="#777" stroke-width="1.8"><line x1="139.5" y1="226.5" x2="157" y2="226.5"/><line x1="148.2" y1="217.8" x2="148.2" y2="235.3"/></g>
</svg>
</div></body></html>
